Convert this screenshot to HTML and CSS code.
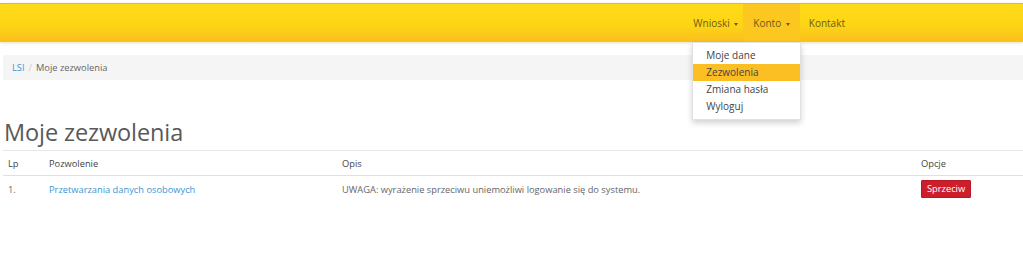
FILE: index.html
```html
<!DOCTYPE html>
<html lang="pl">
<head>
<meta charset="utf-8">
<title>Moje zezwolenia</title>
<link rel="stylesheet" href="styles.css">
</head>
<body>
<header class="navbar">
  <ul class="nav">
    <li class="nav-item"><a href="#">Wnioski <span class="caret"></span></a></li>
    <li class="nav-item active"><a href="#">Konto <span class="caret"></span></a>
      <ul class="dropdown">
        <li><a href="#">Moje dane</a></li>
        <li class="hl"><a href="#">Zezwolenia</a></li>
        <li><a href="#">Zmiana hasła</a></li>
        <li><a href="#">Wyloguj</a></li>
      </ul>
    </li>
    <li class="nav-item"><a href="#">Kontakt</a></li>
  </ul>
</header>
<main class="content">
  <nav class="breadcrumb"><a href="#">LSI</a><span class="sep">/</span><span class="current">Moje zezwolenia</span></nav>
  <h1 class="title">Moje zezwolenia</h1>
  <table class="table">
    <thead>
      <tr><th class="c-lp">Lp</th><th class="c-poz">Pozwolenie</th><th class="c-opis">Opis</th><th class="c-opc">Opcje</th></tr>
    </thead>
    <tbody>
      <tr><td>1.</td><td><a href="#">Przetwarzania danych osobowych</a></td><td>UWAGA: wyrażenie sprzeciwu uniemożliwi logowanie się do systemu.</td><td><button class="btn-danger">Sprzeciw</button></td></tr>
    </tbody>
  </table>
</main>
</body>
</html>
```

FILE: styles.css
```css
* { box-sizing: border-box; }
html, body { margin: 0; padding: 0; background: #fff; }
body {
  font-family: "Open Sans", "Noto Sans", sans-serif;
  font-size: 9.3px;
  color: #555;
  padding-top: 3px;
}
a { text-decoration: none; color: #3d95d3; }

.navbar {
  height: 39px;
  background: linear-gradient(#ffdb17, #fdd515 55%, #fbbf1e);
  border-top: 1px solid #f6b21a;
  box-shadow: 0 1px 3px rgba(200, 160, 60, 0.35);
  display: flex;
  justify-content: flex-end;
  padding-right: 174px;
  position: relative;
  z-index: 2;
}
.nav { list-style: none; margin: 0; padding: 0; display: flex; }
.nav-item { position: relative; }
.nav-item > a {
  display: block;
  height: 38px;
  line-height: 38px;
  padding: 0 5px 0 0;
  color: #6d5a1a;
  font-size: 10px;
}
.nav-item:last-child > a { padding: 0 4px 0 9px; }
.nav-item.active > a { background: #fcc71f; padding: 0 10px 0 10px; }
.caret {
  display: inline-block;
  width: 0; height: 0;
  border-left: 2.5px solid transparent;
  border-right: 2.5px solid transparent;
  border-top: 3px solid #6d5a1a;
  vertical-align: middle;
  margin-left: 2px;
}
.dropdown {
  position: absolute;
  top: 38px;
  left: -51px;
  width: 109px;
  list-style: none;
  margin: 0;
  padding: 4px 0 4px;
  background: #fff;
  border: 1px solid #e2e2e2;
  box-shadow: 0 3px 6px rgba(0,0,0,0.18);
}
.dropdown li a {
  display: block;
  height: 17px;
  line-height: 17px;
  padding: 0 13px;
  color: #444;
  font-size: 10px;
}
.dropdown li.hl a { background: #fbbe23; color: #444; }

.content { padding: 0 0 0 3px; }
.breadcrumb {
  margin-top: 13px;
  height: 25px;
  line-height: 25px;
  background: #f5f5f5;
  padding-left: 9px;
  font-size: 9.3px;
}
.breadcrumb .sep { color: #ccc; margin: 0 4px; }
.breadcrumb .current { color: #666; }
.title {
  margin: 36px 0 2px 1px;
  font-weight: 400;
  font-size: 23.5px;
  line-height: 32px;
  color: #595959;
  letter-spacing: -0.1px;
}
.table {
  width: 100%;
  border-collapse: collapse;
  margin-top: 0;
}
.table th, .table td {
  text-align: left;
  font-weight: 400;
  padding: 0 5px;
  font-size: 9.3px;
}
.table th {
  height: 25px;
  border-top: 1px solid #e8e8e8;
  border-bottom: 1px solid #e0e0e0;
  color: #444;
}
.table td { height: 27px; color: #666; }
.c-lp { width: 41px; }
.c-poz { width: 293px; }
.c-opis { width: 579px; }
.btn-danger {
  font-family: inherit;
  font-size: 9.3px;
  color: #fff;
  background: #cc1f2b;
  border: 1px solid #b81a24;
  border-radius: 1px;
  padding: 0 5px;
  height: 18px;
  line-height: 16px;
}
```
